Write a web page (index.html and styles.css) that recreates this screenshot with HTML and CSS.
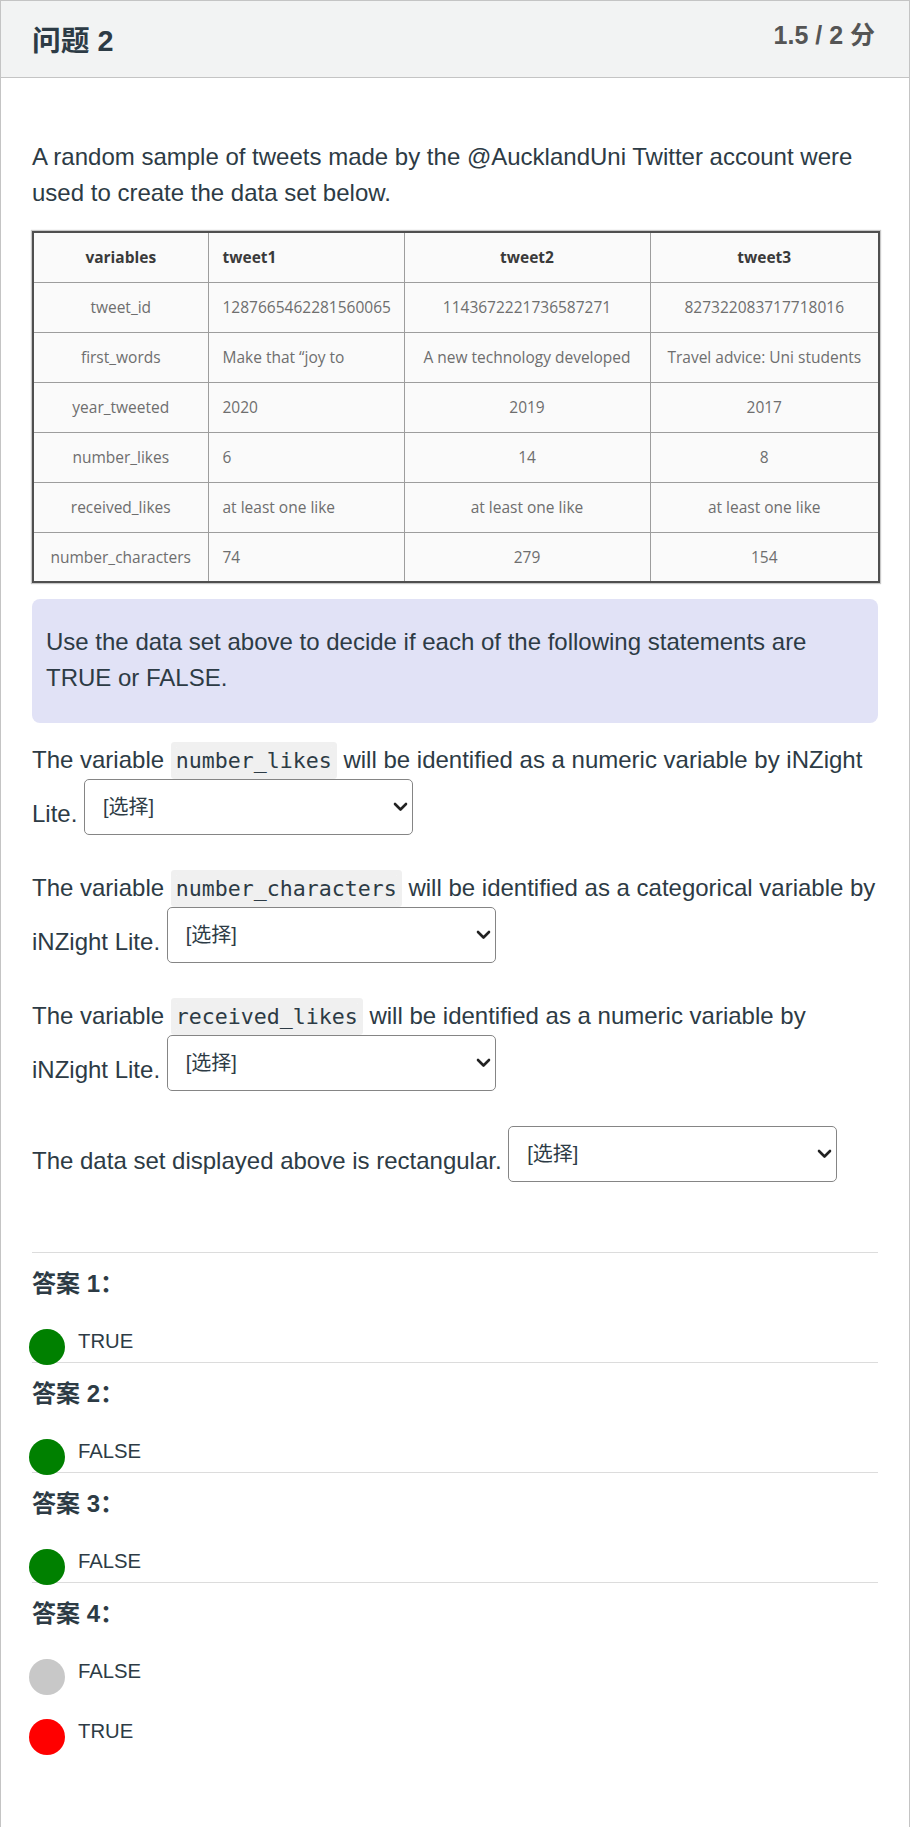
FILE: index.html
```html
<!DOCTYPE html>
<html lang="zh">
<head>
<meta charset="utf-8">
<title>问题 2</title>
<link rel="stylesheet" href="styles.css">
</head>
<body>
<div class="question">
  <div class="q-header">
    <span class="q-title">问题 2</span>
    <span class="q-score">1.5 / 2 分</span>
  </div>
  <div class="q-body">
    <p class="intro">A random sample of tweets made by the @AucklandUni Twitter account were used to create the data set below.</p>
    <table class="data">
      <colgroup><col class="c1"><col class="c2"><col class="c3"><col class="c4"></colgroup>
      <thead>
        <tr><th>variables</th><th class="left">tweet1</th><th>tweet2</th><th>tweet3</th></tr>
      </thead>
      <tbody>
        <tr><td>tweet_id</td><td class="left">1287665462281560065</td><td>1143672221736587271</td><td>827322083717718016</td></tr>
        <tr><td>first_words</td><td class="left">Make that “joy to</td><td>A new technology developed</td><td>Travel advice: Uni students</td></tr>
        <tr><td>year_tweeted</td><td class="left">2020</td><td>2019</td><td>2017</td></tr>
        <tr><td>number_likes</td><td class="left">6</td><td>14</td><td>8</td></tr>
        <tr><td>received_likes</td><td class="left">at least one like</td><td>at least one like</td><td>at least one like</td></tr>
        <tr><td>number_characters</td><td class="left">74</td><td>279</td><td>154</td></tr>
      </tbody>
    </table>
    <div class="note">Use the data set above to decide if each of the following statements are TRUE or FALSE.</div>
    <p class="stmt">The variable <code>number_likes</code> will be identified as a numeric variable by iNZight Lite. <span class="select-wrap"><select><option>[选择]</option></select><svg class="chev" viewBox="0 0 15 10" width="15" height="10"><path d="M2 2 L7.5 7.5 L13 2" fill="none" stroke="#222" stroke-width="2.6" stroke-linecap="round" stroke-linejoin="round"/></svg></span></p>
    <p class="stmt">The variable <code>number_characters</code> will be identified as a categorical variable by iNZight Lite. <span class="select-wrap"><select><option>[选择]</option></select><svg class="chev" viewBox="0 0 15 10" width="15" height="10"><path d="M2 2 L7.5 7.5 L13 2" fill="none" stroke="#222" stroke-width="2.6" stroke-linecap="round" stroke-linejoin="round"/></svg></span></p>
    <p class="stmt">The variable <code>received_likes</code> will be identified as a numeric variable by iNZight Lite. <span class="select-wrap"><select><option>[选择]</option></select><svg class="chev" viewBox="0 0 15 10" width="15" height="10"><path d="M2 2 L7.5 7.5 L13 2" fill="none" stroke="#222" stroke-width="2.6" stroke-linecap="round" stroke-linejoin="round"/></svg></span></p>
    <p class="stmt">The data set displayed above is rectangular. <span class="select-wrap"><select><option>[选择]</option></select><svg class="chev" viewBox="0 0 15 10" width="15" height="10"><path d="M2 2 L7.5 7.5 L13 2" fill="none" stroke="#222" stroke-width="2.6" stroke-linecap="round" stroke-linejoin="round"/></svg></span></p>

    <div class="answers">
      <div class="answer">
        <div class="answer-title">答案 1：</div>
        <ul class="options">
          <li class="option"><span class="dot correct"></span><span class="label">TRUE</span></li>
        </ul>
      </div>
      <div class="answer">
        <div class="answer-title">答案 2：</div>
        <ul class="options">
          <li class="option"><span class="dot correct"></span><span class="label">FALSE</span></li>
        </ul>
      </div>
      <div class="answer">
        <div class="answer-title">答案 3：</div>
        <ul class="options">
          <li class="option"><span class="dot correct"></span><span class="label">FALSE</span></li>
        </ul>
      </div>
      <div class="answer">
        <div class="answer-title">答案 4：</div>
        <ul class="options">
          <li class="option"><span class="dot missed"></span><span class="label">FALSE</span></li>
          <li class="option"><span class="dot wrong"></span><span class="label">TRUE</span></li>
        </ul>
      </div>
    </div>
  </div>
</div>
</body>
</html>
```

FILE: styles.css
```css
* { box-sizing: border-box; }

html, body { margin: 0; padding: 0; background: #fff; }

body {
  font-family: "Liberation Sans", Arial, "Noto Sans CJK SC", sans-serif;
  font-size: 24px;
  line-height: 36px;
  color: #2d3b45;
}

.question {
  border: 1px solid #c4c4c4;
  border-bottom: 0;
  min-height: 1827px;
}

.q-header {
  height: 77px;
  background: #f2f3f3;
  border-bottom: 1px solid #c4c4c4;
  display: flex;
  justify-content: space-between;
  align-items: flex-start;
  padding: 22px 34px 0 31px;
}

.q-title {
  font-size: 28.8px;
  font-weight: 700;
  line-height: 36px;
}

.q-score {
  font-size: 25px;
  font-weight: 700;
  line-height: 30px;
  color: #555;
  margin-top: -3px;
}

.q-body {
  padding: 61px 31px 0 31px;
}

.intro { margin: 0; }

table.data {
  margin-top: 20px;
  width: 846px;
  border-collapse: collapse;
  table-layout: fixed;
  font-family: "Open Sans", "Liberation Sans", sans-serif;
  font-size: 15.5px;
  line-height: 20px;
  color: #6e6e6e;
  background: #fafafa;
  border: 2px solid #4f4f4f;
  box-shadow: 0 0 1px 1px #c8c8c8;
}

.data col.c1 { width: 175px; }
.data col.c2 { width: 196px; }
.data col.c3 { width: 246px; }
.data col.c4 { width: 229px; }

.data th, .data td {
  border: 1px solid #9d9d9d;
  height: 50px;
  padding: 0 8px;
  text-align: center;
  vertical-align: middle;
  white-space: nowrap;
}

.data th { font-weight: 700; color: #3a3a3a; }

.data .left { text-align: left; padding-left: 14px; }

.note {
  margin: 16px 0 19px;
  background: #e1e2f6;
  border-radius: 8px;
  padding: 25px 14px 27px;
}

.stmt { margin: 0 0 35px; }

code {
  font-family: "DejaVu Sans Mono", "Liberation Mono", monospace;
  font-size: 21.6px;
  background: #f0f0f0;
  border-radius: 1px;
  padding: 1px 0;
  margin: 0 5px;
  box-shadow: 0 0 0 5px #f0f0f0;
}

.select-wrap {
  display: inline-block;
  position: relative;
  overflow: hidden;
  vertical-align: -13px;
}

.select-wrap select {
  display: block;
  -webkit-appearance: none;
  appearance: none;
  width: 329px;
  height: 56px;
  margin: 0;
  padding: 0 30px 0 18px;
  border: 1px solid #858585;
  border-radius: 5px;
  background: #fff;
  font-family: "Liberation Sans", "Noto Sans CJK SC", sans-serif;
  font-size: 20px;
  color: #2d3b45;
}

.chev {
  position: absolute;
  right: 5px;
  top: 23px;
  pointer-events: none;
}

.answers { margin-top: 70px; }

.answer {
  border-top: 1px solid #dcdcdc;
  padding-top: 13px;
}

.answer-title {
  font-size: 24px;
  font-weight: 700;
  line-height: 36px;
}

.options {
  list-style: none;
  margin: 27px 0 -3px;
  padding: 0;
  display: flex;
  flex-direction: column;
  gap: 24px;
}

.option {
  display: flex;
  align-items: flex-start;
  margin-left: -3px;
}

.dot {
  flex: none;
  width: 36px;
  height: 36px;
  border-radius: 50%;
  margin-right: 13px;
}

.dot.correct { background: #008000; }
.dot.missed { background: #c8c8c8; }
.dot.wrong { background: #ff0000; }

.label {
  font-size: 20.3px;
  line-height: 24px;
}
```
